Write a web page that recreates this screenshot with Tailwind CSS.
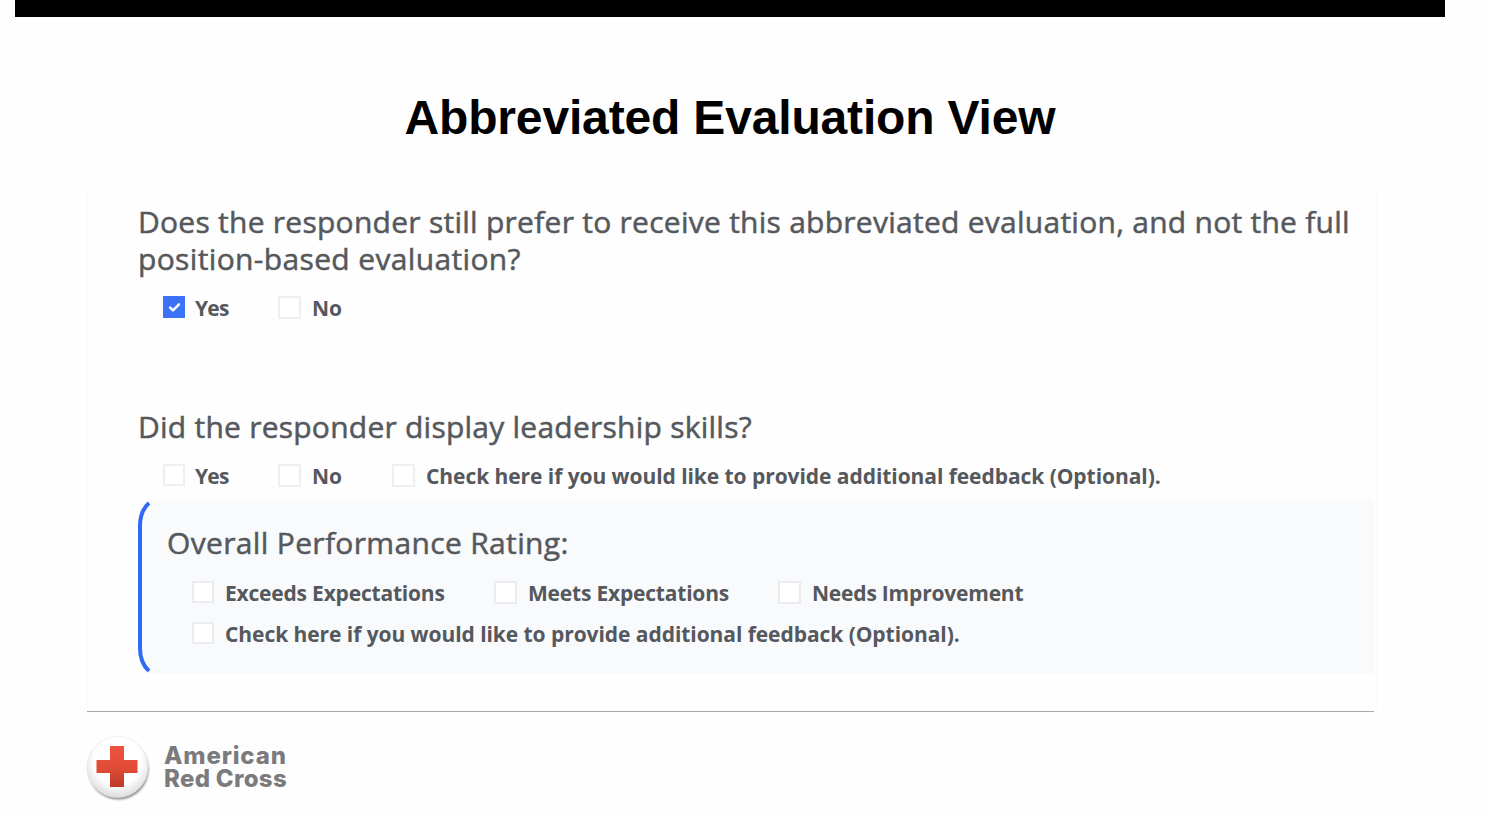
<!DOCTYPE html>
<html lang="en">
<head>
<meta charset="utf-8">
<title>Abbreviated Evaluation View</title>
<script src="https://cdn.jsdelivr.net/npm/@tailwindcss/browser@4"></script>
</head>
<body class="w-[1486px] h-[818px] overflow-hidden bg-[#fefefe] font-['Open_Sans','Noto_Sans',sans-serif] text-[#55585c]">
<div class="ml-[15px] flex h-[818px] w-[1430px] flex-col">
  <div class="h-[17px] shrink-0 bg-black"></div>
  <h1 class="mt-[71px] h-[60px] shrink-0 text-center font-['Liberation_Sans',Arial,sans-serif] text-[48px] leading-[60px] font-bold tracking-[-0.16px] whitespace-nowrap text-black"><span>Abbreviated Evaluation View</span></h1>

  <main class="mt-[39px] ml-[72px] h-[524px] w-[1290px] shrink-0 border border-b-0 border-[#fafafa] pl-[50px]">
    <h2 class="mt-[15px] text-[30px] leading-[37px] font-medium tracking-[0.26px] whitespace-nowrap [-webkit-text-stroke:0.5px_#55585c]"><span>Does the responder still prefer to receive this abbreviated evaluation, and not the full</span><br><span class="tracking-[0.35px]">position-based evaluation?</span></h2>
    <div class="mt-[18px] ml-[25px] flex h-6 items-center text-[21px] font-bold tracking-[-0.06px] whitespace-nowrap">
      <span class="flex size-[22px] items-center justify-center bg-[#3b72f6]"><svg class="size-[13px]" viewBox="0 0 13 13" fill="none" stroke="white" stroke-width="2.4" stroke-linecap="round" stroke-linejoin="round"><path d="M2 6.500 5 9.300 11 3.300"/></svg></span>
      <span class="ml-[10px] w-[83px] pt-1"><span class="tracking-[-0.8px]">Yes</span></span>
      <span class="size-[23px] border-2 border-[#eeeff1] bg-white"></span>
      <span class="ml-[11px] pt-1">No</span>
    </div>

    <h2 class="mt-[89px] text-[30px] leading-[37px] font-medium tracking-[0.24px] whitespace-nowrap [-webkit-text-stroke:0.5px_#55585c]"><span>Did the responder display leadership skills?</span></h2>
    <div class="mt-[18px] ml-[25px] flex h-6 items-center text-[21px] font-bold tracking-[-0.06px] whitespace-nowrap">
      <span class="size-[22px] shrink-0 border-2 border-[#eeeff1] bg-white"></span>
      <span class="ml-[10px] w-[83px] pt-1"><span class="tracking-[-0.8px]">Yes</span></span>
      <span class="size-[23px] shrink-0 border-2 border-[#eeeff1] bg-white"></span>
      <span class="ml-[11px] w-[80px] pt-1">No</span>
      <span class="size-[23px] shrink-0 border-2 border-[#eeeff1] bg-white"></span>
      <span class="ml-[11px] pt-1"><span>Check here if you would like to provide additional feedback (Optional).</span></span>
    </div>

    <section class="relative mt-[13px] mr-[2px] h-[174px] bg-[#f9fafc] pt-6 pl-[29px]">
      <svg class="absolute top-0 left-[-1px] h-[174px] w-4" viewBox="0 0 16 174"><path d="M0 0H14Q1 8 1 24V150Q1 166 14 174H0Z" fill="#fefefe"/><path d="M12 3Q3 11 3 26V148Q3 163 12 171" fill="none" stroke="#2f6af5" stroke-width="4"/></svg>
      <h2 class="text-[30px] leading-[37px] font-medium tracking-[0.34px] whitespace-nowrap [-webkit-text-stroke:0.5px_#55585c]"><span>Overall Performance Rating:</span></h2>
      <div class="mt-[19px] ml-[25px] flex h-6 items-center text-[21px] font-bold tracking-[-0.2px] whitespace-nowrap">
        <span class="size-[22px] shrink-0 border-2 border-[#ebecef] bg-white"></span>
        <span class="ml-[11px] w-[269px] pt-1"><span>Exceeds Expectations</span></span>
        <span class="size-[23px] shrink-0 border-2 border-[#ebecef] bg-white"></span>
        <span class="ml-[11px] w-[250px] pt-1"><span>Meets Expectations</span></span>
        <span class="size-[23px] shrink-0 border-2 border-[#ebecef] bg-white"></span>
        <span class="ml-[11px] pt-1"><span>Needs Improvement</span></span>
      </div>
      <div class="mt-[17px] ml-[25px] flex h-6 items-center text-[21px] font-bold tracking-[-0.06px] whitespace-nowrap">
        <span class="size-[22px] shrink-0 border-2 border-[#ebecef] bg-white"></span>
        <span class="ml-[11px] pt-1"><span>Check here if you would like to provide additional feedback (Optional).</span></span>
      </div>
    </section>
  </main>

  <div class="ml-[72px] h-px w-[1287px] shrink-0 bg-[#a9a9a9]"></div>
  <footer class="mt-[23px] ml-[68px] flex">
    <svg class="h-[72px] w-[72px]" viewBox="0 0 72 72">
      <defs>
        <radialGradient id="disc" cx=".5" cy=".4" r=".6"><stop offset=".65" stop-color="#fff"/><stop offset="1" stop-color="#dcdcde"/></radialGradient>
        <linearGradient id="cross" x2="0" y2="1"><stop stop-color="#ee5340"/><stop offset=".55" stop-color="#e04b37"/><stop offset="1" stop-color="#bd3a29"/></linearGradient>
        <filter id="shade" x="-20%" y="-20%" width="140%" height="140%"><feGaussianBlur stdDeviation="1.2"/></filter>
      </defs>
      <circle cx="35.5" cy="34.5" r="30" fill="#8a8a8a" filter="url(#shade)"/>
      <circle cx="34.5" cy="32" r="30.5" fill="url(#disc)" stroke="#e6e6e7" stroke-width=".6"/>
      <path d="M27 11H41V25H54.500V38H41V52H27V38H13.500V25H27Z" fill="url(#cross)"/>
    </svg>
    <div class="mt-[9px] ml-[9px] font-['Inter',sans-serif] text-[24px] leading-[23px] font-extrabold whitespace-nowrap text-[#7b7b7d]"><div class="tracking-[0.85px]"><span>American</span></div><div class="tracking-[0.3px]"><span>Red Cross</span></div></div>
  </footer>
</div>
</body>
</html>
